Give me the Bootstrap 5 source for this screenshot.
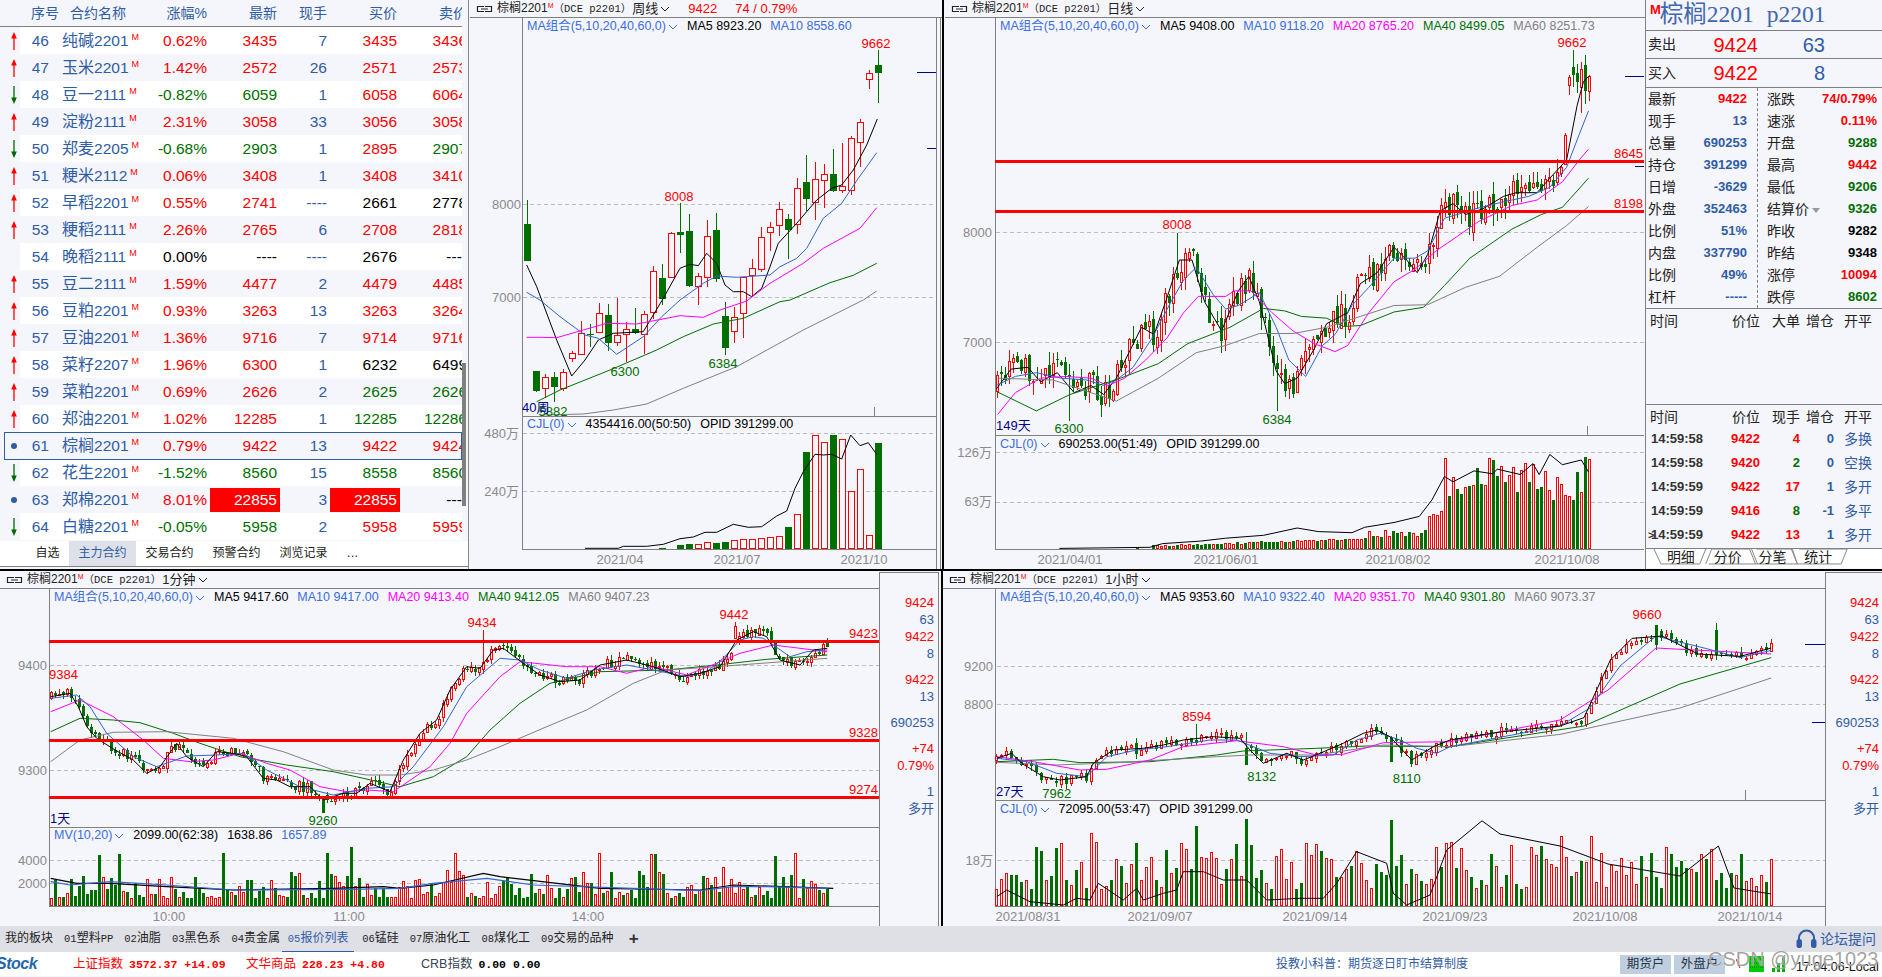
<!DOCTYPE html>
<html lang="zh-CN">
<head>
<meta charset="utf-8">
<title>棕榈2201</title>
<link href="https://cdn.jsdelivr.net/npm/bootstrap@5.3.0/dist/css/bootstrap.min.css" rel="stylesheet">
<style>
html,body{margin:0;width:1882px;height:977px;overflow:hidden;background:#f5f5fc;}
body{font-family:"Liberation Sans","Noto Sans CJK SC",sans-serif;font-size:14px;color:#000;}
.shell{width:1882px;height:977px;position:relative;}
.rowtop{height:571px;border-bottom:2px solid #000;}
.rowbot{height:355px;}
.listpane{width:469px;border-right:1px solid #888;flex:none;position:relative;overflow:hidden;}
.listclip{width:462px;height:540px;overflow:hidden;}
.qtable{width:470px;table-layout:fixed;--bs-table-bg:transparent;margin:0;font-size:15.5px;}
.qtable td,.qtable th{padding:0;height:27px;border:0;line-height:27px;white-space:nowrap;overflow:visible;font-weight:400;color:#2f5ca6;box-shadow:none;}
.qtable thead th{font-size:14px;color:#2f5ca6;height:26px;line-height:25px;border-bottom:1px solid #808080;}
.qtable tbody tr:nth-child(odd) td:not(:first-child){background:#fff;}
.qtable .rgt{text-align:right;padding-right:3px;}
.qtable .numc{text-align:right;}
.qtable th.hnum{padding-left:11px;}
.qtable th.hname{padding-left:21px;}
.qtable td.namecell{padding-left:13px;}
.qtable td.arr{padding-left:6px;}
.arr svg{vertical-align:middle;}
.zh{font-size:16px;}
.supm{font-size:9px;color:#f00;vertical-align:6px;margin-left:3px;line-height:0;}
.cr{color:#f00!important}.cg{color:#006f00!important}.ck{color:#000!important}.cb{color:#2f5ca6!important}
.qtable td.limit{background:#f00!important;color:#fff!important;box-shadow:inset 0 2px 0 #f5f5fc,inset 0 -1px 0 #f5f5fc;}
.selbox{position:absolute;left:4px;top:432px;width:458px;height:28px;border:1px solid #2f5ca6;pointer-events:none;}
.sbar{position:absolute;left:462px;top:363px;width:4px;height:143px;background:#808080;}
.listtabs{height:26px;background:#fff;border-bottom:1px solid #808080;margin-top:1px;padding-left:26px;font-size:12px;color:#222;}
.listtabs span{padding:0 9.5px;line-height:25px;}
.listtabs .on{background:#dfe1e8;color:#2f5ca6;}
.kpane{display:flex;flex-direction:column;position:relative;flex:none;}
.kweek{width:474px;margin-left:1px;border-right:2px solid #000;}
.kday{width:700px;margin-left:1px;}
.kmin{width:879px;}
.khour{width:884px;margin-left:2px;border-left:2px solid #000;}
.khead{height:18px;border-bottom:1px solid #808080;display:flex;align-items:center;flex:none;padding-left:6px;font-size:12.5px;color:#222;white-space:nowrap;}
.khead .nm{font-size:12px;margin-left:4px;}
.khead .mono{font-family:"Liberation Mono","Noto Sans CJK SC",monospace;font-size:10.5px;}
.khead .sm{font-size:7px;color:#f00;vertical-align:4px;}
.khead .per{margin-left:1px;font-size:13px;}
.khead .rd{color:#f00;font-size:13px;}
.khead .rd1{margin-left:18px;}
.khead .rd2{margin-left:18px;}
.kbody{flex:1 1 auto;position:relative;min-height:0;}
.kbody svg.kc{display:block;width:100%;height:100%;font-family:"Liberation Sans","Noto Sans CJK SC",sans-serif;}
.lgd{position:absolute;display:flex;align-items:center;gap:9px;font-size:12.5px;line-height:16px;white-space:nowrap;}
.l1{top:0;}
.kweek .lgd{left:57px;}
.kday .lgd{left:55px;}
.kmin .lgd{left:54px;}
.khour .lgd{left:57px;}
.lw{top:398px;}
.ld{top:418px;}
.lmv{top:238px;}
.lh{top:212px;}
.lb{color:#3a6fdc}.lk{color:#000}.lp{color:#f0f}.lgn{color:#007000}.lgy{color:#808080}
.chev{display:inline-block;width:10px;height:6px;margin-left:2px;}
.rcol{width:60px;flex:none;margin-top:1px;border:1px solid #808080;border-bottom:0;padding:21px 4px 0 0;text-align:right;font-size:13px;line-height:17px;color:#2f5ca6;}
.khour+.rcol{width:57px;border-right:0;padding-right:3px;}
.rcol .gp{margin-top:9px;}
.quote{width:237px;flex:none;border-left:1px solid #808080;background:#f5f5fc;position:relative;}
.qtitle{height:31px;border-bottom:1px solid #808080;display:flex;align-items:center;padding-left:4px;font-family:"Liberation Serif","Noto Sans CJK SC",serif;font-size:23.5px;color:#3f67ae;white-space:nowrap;}
.qtitle b{font:700 13px "Liberation Sans",sans-serif;color:#f00;align-self:flex-start;margin-top:2px;margin-right:-1px;}
.qtitle .sec{margin-left:13px;}
.bs-row{height:28px;border-bottom:1px solid #808080;display:flex;align-items:center;padding-left:2px;font-size:14px;color:#222;}
.bs-row+.bs-row{height:29px;}
.bs-row .px{width:82px;text-align:right;font-size:20px;color:#f00;}
.bs-row .qt{width:67px;text-align:right;font-size:20px;color:#2f5ca6;}
.stats{height:221px;display:grid;grid-template-columns:111px 126px;border-bottom:1px solid #808080;}
.stat{display:flex;flex-direction:column;}
.stat+.stat{border-left:1px dashed #808080;}
.st{height:22px;display:flex;justify-content:space-between;align-items:center;padding-left:2px;padding-right:10px;font-size:14px;color:#222;}
.stat+.stat .st{padding:0 6px 0 9px;}
.st b{font-size:13px;}
.tri{display:inline-block;width:0;height:0;border:4.5px solid transparent;border-top:5px solid #999;border-bottom:0;margin-left:3px;vertical-align:1px;}
.ticks{height:96px;border-bottom:1px solid #808080;padding-top:2px;}
.tk{display:grid;grid-template-columns:78px 32px 40px 34px 48px;padding-left:4px;font-size:14px;color:#222;height:20px;line-height:20px;align-items:center;white-space:nowrap;}
.tk span:nth-child(2),.tk span:nth-child(3),.tk span:nth-child(4){text-align:right;}
.tk span:nth-child(5){padding-left:10px;}
.ticks2{height:143px;padding-top:2px;}
.tk.rw{height:24px;line-height:24px;font-size:13px;font-weight:700;}
.tk.rw span:first-child{color:#333;padding-left:1px;}
.tk.rw span:nth-child(5){font-weight:400;color:#2f5ca6;font-size:14px;}
.tk.rw .cur{position:absolute;left:1px;color:#2f5ca6;font-weight:700;font-size:11px;}
.qtabs{height:20px;background:#fff;border-top:1px solid #808080;}
.qtabs svg{display:block;width:100%;height:19px;}
.barbot{height:26px;background:#dfe0e6;flex:none;font-size:12px;color:#222;align-items:center;position:relative;}
.barbot span.t{padding:0 6px;height:26px;line-height:25px;white-space:nowrap;margin-right:-1px;}
.barbot .mono{font-family:"Liberation Mono","Noto Sans CJK SC",monospace;font-size:10.5px;}
.barbot .on{color:#2f5ca6;border-bottom:1px solid #2f5ca6;width:72px;text-align:center;padding:0!important;margin-left:-3px;margin-right:2px!important;}
.barbot .first{margin-left:-1px;}
.barbot .plus{font-size:17px;font-weight:700;margin-left:10px;color:#333;}
.forum{margin-left:auto;margin-right:6px;color:#2f5ca6;font-size:14px;display:flex;align-items:center;gap:3px;}
.stbar{height:24px;background:#fff;flex:none;align-items:center;position:relative;font-size:13px;white-space:nowrap;}
.logo{font-weight:700;font-style:italic;color:#1f66ad;font-size:16px;margin-left:-4px;width:77px;letter-spacing:-.5px;}
.idx{font-size:12.5px;}
.idx b{font-family:"Liberation Mono",monospace;font-size:11.5px;margin-left:6px;}
.crbl{color:#345;}
.w1{width:173px;}.w2{width:175px;}.w3{width:855px;}
.tip{color:#2f5ca6;font-size:12px;width:344px;}
.acct{background:#bfcfe0;color:#234;height:19px;line-height:19px;width:51px;text-align:center;font-size:12.5px;margin-right:3px;}
.stimg{margin-left:8px;}
.clock{position:absolute;left:1796px;top:6px;font-size:12.5px;color:#111;}
.wmark{position:absolute;left:1708px;top:-8px;z-index:5;font-size:20px;color:rgba(100,100,100,.6);pointer-events:none;text-shadow:0 0 1px #fff;}
</style>
</head>
<body>
<div class="shell d-flex flex-column">
  <div class="rowtop d-flex">
    <div class="listpane">
      <div class="listclip">
        <table class="table table-borderless qtable" id="qt">
          <colgroup><col style="width:20px"><col style="width:29px"><col style="width:92px"><col style="width:69px"><col style="width:70px"><col style="width:50px"><col style="width:70px"><col style="width:70px"></colgroup>
          <thead><tr>
            <th></th><th class="hnum">序号</th><th class="hname">合约名称</th>
            <th class="rgt">涨幅%</th><th class="rgt">最新</th><th class="rgt">现手</th><th class="rgt">买价</th><th class="rgt">卖价</th>
          </tr></thead>
          <tbody id="qb"></tbody>
        </table>
      </div>
      <div class="selbox"></div><div class="sbar"></div>
      <div class="listtabs d-flex align-items-center">
        <span>自选</span><span class="on">主力合约</span><span>交易合约</span><span>预警合约</span><span>浏览记录</span><span>…</span>
      </div>
    </div>

    <section class="kpane kweek" id="pw">
      <div class="khead"><svg width="17" height="8" viewBox="0 0 17 8" fill="none" stroke="#222"><path d="M8 1.500H1.500v5H8M9 1.500h6.500v5H9M5 4h7" stroke-width="1.200"/></svg>
        <span class="nm">棕榈2201<span class="sm">M</span><span class="mono">（DCE p2201）</span></span><span class="per">周线</span><svg class="chev" viewBox="0 0 10 6" fill="none" stroke="#222"><path d="M1 1l4 4 4-4"/></svg>
        <span class="rd rd1">9422</span><span class="rd rd2">74 / 0.79%</span></div>
      <div class="kbody"><svg class="kc" id="cw"></svg>
        <div class="lgd l1"><span class="lb">MA组合(5,10,20,40,60,0)<svg class="chev" viewBox="0 0 10 6" fill="none" stroke="#3a6fdc"><path d="M1 1l4 4 4-4"/></svg></span><span class="lk">MA5 8923.20</span><span class="lb">MA10 8558.60</span></div>
        <div class="lgd lw"><span class="lb">CJL(0)<svg class="chev" viewBox="0 0 10 6" fill="none" stroke="#3a6fdc"><path d="M1 1l4 4 4-4"/></svg></span><span class="lk">4354416.00(50:50)</span><span class="lk">OPID 391299.00</span></div>
      </div>
    </section>

    <section class="kpane kday" id="pd">
      <div class="khead"><svg width="17" height="8" viewBox="0 0 17 8" fill="none" stroke="#222"><path d="M8 1.500H1.500v5H8M9 1.500h6.500v5H9M5 4h7" stroke-width="1.200"/></svg>
        <span class="nm">棕榈2201<span class="sm">M</span><span class="mono">（DCE p2201）</span></span><span class="per">日线</span><svg class="chev" viewBox="0 0 10 6" fill="none" stroke="#222"><path d="M1 1l4 4 4-4"/></svg></div>
      <div class="kbody"><svg class="kc" id="cd"></svg>
        <div class="lgd l1"><span class="lb">MA组合(5,10,20,40,60,0)<svg class="chev" viewBox="0 0 10 6" fill="none" stroke="#3a6fdc"><path d="M1 1l4 4 4-4"/></svg></span><span class="lk">MA5 9408.00</span><span class="lb">MA10 9118.20</span><span class="lp">MA20 8765.20</span><span class="lgn">MA40 8499.05</span><span class="lgy">MA60 8251.73</span></div>
        <div class="lgd ld"><span class="lb">CJL(0)<svg class="chev" viewBox="0 0 10 6" fill="none" stroke="#3a6fdc"><path d="M1 1l4 4 4-4"/></svg></span><span class="lk">690253.00(51:49)</span><span class="lk">OPID 391299.00</span></div>
      </div>
    </section>

    <aside class="quote">
      <div class="qtitle"><b>M</b><span>棕榈2201</span><span class="sec">p2201</span></div>
      <div class="bs-row"><span>卖出</span><span class="px">9424</span><span class="qt">63</span></div>
      <div class="bs-row"><span>买入</span><span class="px">9422</span><span class="qt">8</span></div>
      <div class="stats" id="st"></div>
      <div class="ticks"><div class="tk"><span>时间</span><span>价位</span><span>大单</span><span>增仓</span><span>开平</span></div></div>
      <div class="ticks2" id="tk"></div>
      <div class="qtabs"><svg viewBox="0 0 237 19"><g fill="none" stroke="#888"><path d="M8 0l7 15h39l6-15"/><path d="M60 0h1M60 15l6-15h38l6 15H63"/><path d="M112 15l-6-15M111 0h36l5 15h-42"/><path d="M152 15l-6-15M154 0h48l-6 15h-44"/></g>
        <g font-size="14" fill="#222" text-anchor="middle" font-family="Noto Sans CJK SC"><text x="35" y="13">明细</text><text x="82" y="13">分价</text><text x="127" y="13">分笔</text><text x="173" y="13">统计</text></g></svg></div>
    </aside>
  </div>

  <div class="rowbot d-flex">
    <section class="kpane kmin" id="pm">
      <div class="khead"><svg width="17" height="8" viewBox="0 0 17 8" fill="none" stroke="#222"><path d="M8 1.500H1.500v5H8M9 1.500h6.500v5H9M5 4h7" stroke-width="1.200"/></svg>
        <span class="nm">棕榈2201<span class="sm">M</span><span class="mono">（DCE p2201）</span></span><span class="per">1分钟</span><svg class="chev" viewBox="0 0 10 6" fill="none" stroke="#222"><path d="M1 1l4 4 4-4"/></svg></div>
      <div class="kbody"><svg class="kc" id="cm"></svg>
        <div class="lgd l1"><span class="lb">MA组合(5,10,20,40,60,0)<svg class="chev" viewBox="0 0 10 6" fill="none" stroke="#3a6fdc"><path d="M1 1l4 4 4-4"/></svg></span><span class="lk">MA5 9417.60</span><span class="lb">MA10 9417.00</span><span class="lp">MA20 9413.40</span><span class="lgn">MA40 9412.05</span><span class="lgy">MA60 9407.23</span></div>
        <div class="lgd lmv"><span class="lb">MV(10,20)<svg class="chev" viewBox="0 0 10 6" fill="none" stroke="#3a6fdc"><path d="M1 1l4 4 4-4"/></svg></span><span class="lk">2099.00(62:38)</span><span class="lk">1638.86</span><span class="lb">1657.89</span></div>
      </div>
    </section>
    <div class="rcol"><div class="cr">9424</div><div>63</div><div class="cr">9422</div><div>8</div><div class="cr gp">9422</div><div>13</div><div class="gp">690253</div><div class="cr gp">+74</div><div class="cr">0.79%</div><div class="gp">1</div><div>多开</div></div>
    <section class="kpane khour" id="ph">
      <div class="khead"><svg width="17" height="8" viewBox="0 0 17 8" fill="none" stroke="#222"><path d="M8 1.500H1.500v5H8M9 1.500h6.500v5H9M5 4h7" stroke-width="1.200"/></svg>
        <span class="nm">棕榈2201<span class="sm">M</span><span class="mono">（DCE p2201）</span></span><span class="per">1小时</span><svg class="chev" viewBox="0 0 10 6" fill="none" stroke="#222"><path d="M1 1l4 4 4-4"/></svg></div>
      <div class="kbody"><svg class="kc" id="ch"></svg>
        <div class="lgd l1"><span class="lb">MA组合(5,10,20,40,60,0)<svg class="chev" viewBox="0 0 10 6" fill="none" stroke="#3a6fdc"><path d="M1 1l4 4 4-4"/></svg></span><span class="lk">MA5 9353.60</span><span class="lb">MA10 9322.40</span><span class="lp">MA20 9351.70</span><span class="lgn">MA40 9301.80</span><span class="lgy">MA60 9073.37</span></div>
        <div class="lgd lh"><span class="lb">CJL(0)<svg class="chev" viewBox="0 0 10 6" fill="none" stroke="#3a6fdc"><path d="M1 1l4 4 4-4"/></svg></span><span class="lk">72095.00(53:47)</span><span class="lk">OPID 391299.00</span></div>
      </div>
    </section>
    <div class="rcol"><div class="cr">9424</div><div>63</div><div class="cr">9422</div><div>8</div><div class="cr gp">9422</div><div>13</div><div class="gp">690253</div><div class="cr gp">+74</div><div class="cr">0.79%</div><div class="gp">1</div><div>多开</div></div>
  </div>

  <nav class="barbot d-flex">
    <span class="t first">我的板块</span><span class="t"><span class="mono">01</span>塑料<span class="mono">PP</span></span><span class="t"><span class="mono">02</span>油脂</span><span class="t"><span class="mono">03</span>黑色系</span><span class="t"><span class="mono">04</span>贵金属</span><span class="t on"><span class="mono">05</span>报价列表</span><span class="t"><span class="mono">06</span>锰硅</span><span class="t"><span class="mono">07</span>原油化工</span><span class="t"><span class="mono">08</span>煤化工</span><span class="t"><span class="mono">09</span>交易的品种</span><span class="plus">+</span>
    <div class="forum"><svg width="21" height="20" viewBox="0 0 21 20" fill="none" stroke="#2f5ca6" stroke-width="2"><path d="M3 13V9a7.500 7.500 0 0 1 15 0v4"/><rect x="1.500" y="11" width="3.500" height="7" rx="1.500" fill="#2f5ca6"/><rect x="16" y="11" width="3.500" height="7" rx="1.500" fill="#2f5ca6"/></svg>论坛提问</div>
  </nav>
  <footer class="stbar d-flex">
    <span class="logo">Stock</span>
    <span class="idx cr w1">上证指数<b>3572.37 +14.09</b></span>
    <span class="idx cr w2">文华商品<b>228.23 +4.80</b></span>
    <span class="idx w3"><span class="crbl">CRB指数</span><b>0.00 0.00</b></span>
    <span class="tip">投教小科普：期货逐日盯市结算制度</span>
    <span class="acct">期货户</span><span class="acct">外盘户</span>
    <svg class="stimg" width="60" height="20" viewBox="0 0 60 20"><path d="M0 5l4 9" stroke="#f00"/><rect x="13" y="2" width="15" height="16" fill="#0c0"/><path d="M14 5h13M14 9h13M14 13h13" stroke="#063" stroke-dasharray="1 1"/><rect x="36" y="14" width="3" height="4" fill="#0a0"/><rect x="41" y="9" width="3" height="9" fill="#0a0"/><rect x="46" y="3" width="3" height="15" fill="#0a0"/></svg>
    <span class="clock">17:04:06-Local</span>
    <span class="wmark">CSDN @yuge1023</span>
  </footer>
</div>

<script src="https://cdn.jsdelivr.net/npm/bootstrap@5.3.0/dist/js/bootstrap.bundle.min.js"></script>
<script>
/* ---------- quote list ---------- */
const R='cr',G='cg',K='ck',B='cb';
const rows=[
['u',46,'纯碱2201','0.62%',R,'3435',R,'7',B,'3435',R,'3436',R],
['u',47,'玉米2201','1.42%',R,'2572',R,'26',B,'2571',R,'2573',R],
['d',48,'豆一2111','-0.82%',G,'6059',G,'1',B,'6058',R,'6064',R],
['u',49,'淀粉2111','2.31%',R,'3058',R,'33',B,'3056',R,'3058',R],
['d',50,'郑麦2205','-0.68%',G,'2903',G,'1',B,'2895',R,'2907',G],
['u',51,'粳米2112','0.06%',R,'3408',R,'1',B,'3408',R,'3410',R],
['u',52,'早稻2201','0.55%',R,'2741',R,'----',B,'2661',K,'2778',K],
['u',53,'粳稻2111','2.26%',R,'2765',R,'6',B,'2708',R,'2818',R],
['',54,'晚稻2111','0.00%',K,'----',K,'----',B,'2676',K,'----',K],
['u',55,'豆二2111','1.59%',R,'4477',R,'2',B,'4479',R,'4485',R],
['u',56,'豆粕2201','0.93%',R,'3263',R,'13',B,'3263',R,'3264',R],
['u',57,'豆油2201','1.36%',R,'9716',R,'7',B,'9714',R,'9716',R],
['u',58,'菜籽2207','1.96%',R,'6300',R,'1',B,'6232',K,'6499',K],
['u',59,'菜粕2201','0.69%',R,'2626',R,'2',B,'2625',G,'2626',G],
['u',60,'郑油2201','1.02%',R,'12285',R,'1',B,'12285',G,'12286',G],
['o',61,'棕榈2201','0.79%',R,'9422',R,'13',B,'9422',R,'9424',R],
['d',62,'花生2201','-1.52%',G,'8560',G,'15',B,'8558',G,'8560',G],
['o',63,'郑棉2201','8.01%',R,'22855','limit','3',B,'22855','limit','----',K],
['d',64,'白糖2201','-0.05%',G,'5958',G,'2',B,'5958',R,'5959',R]];
const ic={u:'<svg width="12" height="20" viewBox="0 0 12 20"><path d="M8 19V5" stroke="#f00" stroke-width="1.300"/><path d="M8 1l2.800 6.500h-5.600z" fill="#f00"/></svg>',
d:'<svg width="12" height="20" viewBox="0 0 12 20"><path d="M8 1v14" stroke="#060" stroke-width="1.300"/><path d="M8 19l2.800-6.500h-5.600z" fill="#060"/></svg>',
o:'<svg width="12" height="20" viewBox="0 0 12 20"><circle cx="8" cy="10" r="3" fill="#2f5ca6"/></svg>','':''};
document.getElementById('qb').innerHTML=rows.map(r=>`<tr><td class="arr">${ic[r[0]]}</td><td class="numc">${r[1]}</td><td class="namecell"><span class="zh">${r[2].slice(0,2)}</span>${r[2].slice(2)}<span class="supm">M</span></td><td class="rgt ${r[4]}">${r[3]}</td><td class="rgt ${r[6]}">${r[5]}</td><td class="rgt ${r[8]}">${r[7]}</td><td class="rgt ${r[10]}">${r[9]}</td><td class="rgt ${r[12]}">${r[11]}</td></tr>`).join('');
/* ---------- quote stats ---------- */
const s1=[['最新','9422',R],['现手','13',B],['总量','690253',B],['持仓','391299',B],['日增','-3629',B],['外盘','352463',B],['比例','51%',B],['内盘','337790',B],['比例','49%',B],['杠杆','-----',B]];
const s2=[['涨跌','74/0.79%',R],['速涨','0.11%',R],['开盘','9288',G],['最高','9442',R],['最低','9206',G],['结算价<i class="tri"></i>','9326',G],['昨收','9282',K],['昨结','9348',K],['涨停','10094',R],['跌停','8602',G]];
const stat=a=>'<div class="stat">'+a.map(r=>`<div class="st"><span>${r[0]}</span><b class="${r[2]}">${r[1]}</b></div>`).join('')+'</div>';
document.getElementById('st').innerHTML=stat(s1)+stat(s2);
const tk=[['14:59:58','9422','4',R,'0','多换'],['14:59:58','9420','2',G,'0','空换'],['14:59:59','9422','17',R,'1','多开'],['14:59:59','9416','8',G,'-1','多平'],['14:59:59','9422','13',R,'1','多开']];
document.getElementById('tk').innerHTML='<div class="tk"><span>时间</span><span>价位</span><span>现手</span><span>增仓</span><span>开平</span></div>'+tk.map((r,i)=>`<div class="tk rw"><span>${i==4?'<span class="cur">&gt;</span>':''}${r[0]}</span><span class="cr">${r[1]}</span><span class="${r[3]}">${r[2]}</span><span class="cb">${r[4]}</span><span>${r[5]}</span></div>`).join('');

/* ---------- chart helpers (page coordinates) ---------- */
const C={r:'#f00',g:'#006f00',bg:'#f5f5fc',bl:'#3264d0',pk:'#f0f',ma40:'#007000',gy:'#808080',lb:'#8a8a8a'};
const rnd=s=>()=>(s=(s*16807)%2147483647)/2147483647;
const fr=(ox,oy,sx,sy,a)=>{const o=[];for(const p of a)o.push([ox+p[0]/sx,oy+p[1]/sy]);return o;};
const poly=(pts,col,w=1)=>`<polyline fill="none" stroke="${col}" stroke-width="${w}" points="${pts.map(p=>p[0].toFixed(1)+','+p[1].toFixed(1)).join(' ')}"/>`;
const interp=p=>x=>{if(x<=p[0][0])return p[0][1];for(let i=1;i<p.length;i++)if(x<=p[i][0]){const t=(x-p[i-1][0])/(p[i][0]-p[i-1][0]);return p[i-1][1]+t*(p[i][1]-p[i-1][1]);}return p[p.length-1][1];};
const txt=(x,y,s,col,a='start',sz=13,extra='')=>`<text x="${x}" y="${y}" fill="${col}" text-anchor="${a}" font-size="${sz}" dominant-baseline="central" ${extra}>${s}</text>`;
const dash=(x1,x2,y)=>`<line x1="${x1}" x2="${x2}" y1="${y+.5}" y2="${y+.5}" stroke="#bdbdbd" stroke-dasharray="4 3"/>`;
const ln=(x1,y1,x2,y2,col='#808080',w=1)=>`<line x1="${x1}" y1="${y1}" x2="${x2}" y2="${y2}" stroke="${col}" stroke-width="${w}"/>`;
function candle(c,bw){
  const x=Math.round(c.x),h=Math.floor(bw/2);let s='';
  const col=c.up?C.r:C.g,t=Math.round(c.bt),b=Math.round(Math.max(c.bb,c.bt+1));
  s+=`<line x1="${x+.5}" x2="${x+.5}" y1="${Math.round(c.wt)}" y2="${Math.round(c.wb)}" stroke="${col}"/>`;
  if(c.up)s+=`<rect x="${x-h+.5}" y="${t+.5}" width="${2*h}" height="${Math.max(b-t,1)}" fill="${C.bg}" stroke="${col}"/>`;
  else s+=`<rect x="${x-h}" y="${t}" width="${2*h+1}" height="${Math.max(b-t,1)}" fill="${col}"/>`;
  return s;
}
function gen(n,x0,step,path,noise,wick,seed,over={}){
  const r=rnd(seed),out=[];let prev=path(x0);
  for(let i=0;i<n;i++){
    const x=x0+i*step,cl=path(x)+(r()-.5)*noise,op=prev+(r()-.5)*noise*.35;
    const up=cl<op,bt=Math.min(cl,op),bb=Math.max(cl,op);
    const c={x,up,bt,bb,wt:bt-r()*wick,wb:bb+r()*wick};
    if(over[i])Object.assign(c,over[i]);
    out.push(c);prev=cl;
  }
  return out;
}
const bars=(cs,base,hf,w)=>cs.map((c,i)=>{const v=hf(c.x,i);if(v<=0)return'';const x=Math.round(c.x),h=Math.floor(w/2),top=Math.round(base-v);
  return c.up?`<rect x="${x-h+.5}" y="${top+.5}" width="${2*h}" height="${base-top-1}" fill="${C.bg}" stroke="${C.r}"/>`:`<rect x="${x-h}" y="${top}" width="${2*h+1}" height="${base-top}" fill="${C.g}"/>`}).join('');
const setup=(id,x,y,w,h,html)=>{const e=document.getElementById(id);e.setAttribute('viewBox',`${x} ${y} ${w} ${h}`);e.setAttribute('preserveAspectRatio','none');e.innerHTML=html;};
const crisp=s=>`<g shape-rendering="crispEdges">${s}</g>`;

/* ---------- weekly ---------- */
(function(){
 const z3=a=>fr(470,0,3,3,a),z4=a=>fr(470,300,3,3,a);
 const d=[[0,224,261,200,261],[1,371,391,371,392],[2,377,388,374,398,1],[3,377,387,372,402],[4,372,388,369,391,1],[5,353,358,351,362,1],[6,333,354,321,355,1],[7,334,335,324,347],[8,313,332,303,332,1],[9,315,343,304,351],[10,335,342,298,346,1],[11,329,334,322,362,1],[12,329,333,308,334],[13,314,334,311,354,1],[14,271,312,266,319,1],[15,278,299,264,305],[16,233,277,232,277,1],[17,232,235,203,253],[18,231,286,214,287],[19,276,286,273,305,1],[20,236,277,220,287,1],[21,230,279,213,282],[22,316,348,302,355],[23,317,331,307,343,1],[24,277,313,277,338,1],[25,268,275,259,297,1],[26,237,269,227,272,1],[27,227,232,222,251,1],[28,209,225,202,236,1],[29,219,230,214,259],[30,188,224,178,234,1],[31,182,199,155,211],[32,179,202,162,220,1],[33,174,180,164,208,1],[34,174,191,149,192],[35,186,190,143,193,1],[36,138,190,136,195,1],[37,122,142,119,167,1],[38,73,79,70,89,1],[39,65,73,50,103]];
 const cs=d.map(a=>({x:526.7+a[0]*9,bt:a[1],bb:a[2],wt:a[3],wb:a[4],up:!!a[5]}));
 const ma5=z3([[170,795],[200,860],[215,900]]).concat(z4([[260,120],[305,228],[345,180],[385,120],[430,100],[520,95]]),z3([[580,895],[630,805],[660,793],[685,797],[710,760],[740,790],[765,855],[790,875],[820,875],[845,890],[875,865],[900,800],[925,730],[980,670],[1040,600],[1085,565],[1115,555],[1150,510],[1190,435],[1222,357]]));
 const ma10=z3([[170,877],[210,900]]).concat(z4([[270,50],[345,105],[385,115],[440,163],[520,110],[575,50],[630,0]]),z3([[700,850],[740,828],[800,832],[900,825],[930,800],[980,775],[1010,745],[1060,655],[1115,610],[1165,535],[1190,500],[1220,458]]));
 const ma20=z4([[170,112],[210,112],[260,113],[340,90],[410,70],[500,72],[630,47],[700,52],[750,30],[830,3]]).concat(z3([[900,850],[1000,790],[1060,745],[1170,685],[1220,623]]));
 const ma40=z4([[200,305],[270,270],[420,210],[560,150],[640,110],[730,72],[820,55],[930,5],[960,0]]).concat(z3([[1080,848],[1150,826],[1220,790]]));
 const ma60=z4([[210,345],[340,342],[430,330],[530,312],[640,265],[800,200],[1000,90],[1180,0]]).concat(z3([[1220,873]]));
 const vb=[[15,745,0],[16,745,1],[17,735,0],[18,733,0],[19,733,1],[20,727,1],[21,730,0],[22,727,0],[23,722,1],[24,718,1],[25,718,1],[26,715,1],[27,712,1],[28,709,1],[29,681,0],[30,643,1],[31,456,0],[32,407,1],[33,427,1],[34,405,0],[35,418,1],[36,574,1],[37,508,1],[38,706,1],[39,429,0]];
 const vol=vb.map(a=>({x:526.7+a[0]*9,up:!!a[2],v:(748-a[1])/3}));
 const oi=z4([[345,745],[445,745],[460,739],[530,739],[580,733],[630,716],[670,711],[705,697],[740,697],[790,673],[835,682],[875,680],[920,648],[950,633],[975,565],[1000,515],[1035,463],[1060,465],[1085,463],[1115,477],[1142,405],[1170,437],[1195,428],[1220,463]]);
 let s='';
 s+=dash(523,936,204)+dash(523,936,297)+dash(523,936,433)+dash(523,936,491);
 s+=crisp(ln(522.5,18,522.5,550)+ln(522,416.500,936,416.500)+ln(522,549.500,936,549.500)+ln(936.500,0,936.500,569)+ln(940.500,0,940.500,569)+ln(917,72.500,936,72.500,'#00008b')+ln(927,148.500,936,148.500,'#00008b')+ln(874.500,407,874.500,416));
 s+=crisp(cs.map(c=>candle(c,7)).join(''));
 s+=poly(ma5,'#000')+poly(ma10,C.bl)+poly(ma20,C.pk)+poly(ma40,C.ma40)+poly(ma60,C.gy);
 s+=crisp(bars(vol,549,(x,i)=>vol[i].v,7));
 s+=poly(oi,'#000');
 s+=txt(876,43,'9662',C.r,'middle')+txt(679,196,'8008',C.r,'middle')+txt(625,371,'6300',C.g,'middle')+txt(723,363,'6384',C.g,'middle')+txt(553,411,'5882',C.g,'middle')+txt(522,407,'40周','#00008b');
 s+=txt(521,204.500,'8000',C.lb,'end')+txt(521,297.500,'7000',C.lb,'end')+txt(519,433,'480万',C.lb,'end')+txt(519,491,'240万',C.lb,'end');
 s+=txt(620,559,'2021/04',C.lb,'middle')+txt(737,559,'2021/07',C.lb,'middle')+txt(864,559,'2021/10',C.lb,'middle');
 setup('cw',470,18,472,551,s);
})();

/* ---------- daily ---------- */
(function(){
 const z=a=>fr(990,0,2.376,2.75,a);
 const ma5=z([[15,1070],[50,1015],[90,1010],[120,1050],[160,1025],[200,1080],[240,1060],[270,1085],[300,1040],[330,970],[360,900],[390,920],[420,820],[450,715],[480,715],[510,830],[550,910],[590,800],[615,760],[640,830],[680,1020],[700,1055],[730,1040],[770,960],[800,890],[850,860],[880,780],[920,750],[960,680],[990,715],[1015,750],[1040,700],[1070,580],[1100,560],[1130,590],[1170,575],[1220,540],[1250,530],[1300,530],[1330,490],[1370,440],[1395,290],[1410,225],[1422,210]]);
 const ma10=z([[15,1060],[60,1035],[110,1025],[170,1040],[230,1045],[270,1060],[300,1045],[340,1010],[385,930],[430,830],[460,770],[490,735],[530,810],[560,850],[590,840],[640,805],[680,900],[710,990],[750,1035],[790,950],[820,920],[860,840],[900,790],[960,710],[1010,710],[1040,690],[1080,600],[1110,590],[1150,575],[1220,555],[1280,540],[1330,515],[1370,460],[1400,370],[1422,305]]);
 const ma20=z([[18,1140],[60,1080],[120,1040],[180,1035],[240,1040],[280,1060],[320,1040],[370,990],[420,930],[460,860],[495,815],[560,815],[580,800],[620,800],[670,860],[720,910],[770,945],[820,967],[850,950],[900,860],[960,775],[1010,740],[1060,690],[1110,650],[1160,610],[1240,565],[1300,550],[1360,500],[1400,440],[1422,410]]);
 const ma40=z([[18,1078],[110,1130],[190,1085],[310,1040],[400,1000],[470,945],[570,900],[650,848],[700,855],[740,870],[800,875],[840,898],[880,895],[960,858],[1030,845],[1080,785],[1140,710],[1240,630],[1310,590],[1360,570],[1422,490]]);
 const ma60=z([[18,1040],[150,1045],[240,1080],[300,1103],[400,1040],[490,970],[560,950],[640,917],[720,917],[800,900],[880,870],[960,840],[1040,838],[1130,790],[1210,760],[1300,680],[1370,620],[1422,568]]);
 const oi=z([[165,1508],[380,1505],[410,1495],[500,1488],[560,1480],[650,1472],[730,1452],[780,1462],[860,1465],[890,1450],[960,1437],[1020,1420],[1050,1375],[1080,1310],[1100,1325],[1150,1295],[1195,1303],[1205,1290],[1260,1305],[1290,1275],[1305,1305],[1330,1250],[1360,1278],[1405,1265],[1422,1298]]);
 const ix=zx=>Math.round((990+zx/2.376-997)/4),Y=v=>v/2.75;
 const o={};
 o[ix(444)]={wt:Y(640)};o[ix(190)]={wb:Y(1158),up:false};o[ix(683)]={wb:Y(1130),up:false};
 [[1367,1,370,450,365,455],[1377,1,212,235,205,262],[1387,0,185,205,138,240],[1396,0,200,225,175,255],[1405,1,190,240,170,310],[1415,0,178,250,150,285],[1424,1,210,250,205,278]].forEach(a=>{o[ix(a[0])]={up:!!a[1],bt:Y(a[2]),bb:Y(a[3]),wt:Y(a[4]),wb:Y(a[5])};});
 const cs=gen(149,997,4,interp(ma5),28,14,4111,o);
 const r=rnd(777);
 const hf=x=>{const zx=(x-990)*2.376,n=r();if(zx<165)return 0;if(zx<380)return n<.1?1:0;if(zx<1040)return 2+n*2+(zx-380)/660*10+n*(zx>900?8:0);if(zx<1075)return 25+n*30;return 48+n*47;};
 let s='';
 s+=dash(996,1644,232)+dash(996,1644,342)+dash(996,1644,452)+dash(996,1644,502);
 s+=crisp(ln(995.500,18,995.500,550)+ln(995,435.500,1644,435.500)+ln(995,549.500,1644,549.500)+ln(1625,76.500,1644,76.500,'#00008b')+ln(1635,166.500,1644,166.500,'#00008b')+ln(1587.500,426,1587.500,435));
 s+=crisp(cs.map(c=>candle(c,3)).join(''));
 s+=poly(ma5,'#000')+poly(ma10,C.bl)+poly(ma20,C.pk)+poly(ma40,C.ma40)+poly(ma60,C.gy);
 s+=crisp(`<rect x="995" y="159.500" width="649" height="3" fill="#f00"/><rect x="995" y="209.500" width="649" height="3" fill="#f00"/>`);
 s+=crisp(bars(cs,549,hf,3));
 s+=poly(oi,'#000');
 s+=txt(1643,153,'8645',C.r,'end')+txt(1643,203,'8198',C.r,'end');
 s+=txt(1572,42,'9662',C.r,'middle')+txt(1177,224,'8008',C.r,'middle')+txt(1069,428,'6300',C.g,'middle')+txt(1277,419,'6384',C.g,'middle')+txt(996,425,'149天','#00008b');
 s+=txt(992,232.500,'8000',C.lb,'end')+txt(992,342.500,'7000',C.lb,'end')+txt(992,452,'126万',C.lb,'end')+txt(992,501,'63万',C.lb,'end');
 [[1070,'2021/04/01'],[1226,'2021/06/01'],[1398,'2021/08/02'],[1567,'2021/10/08']].forEach(a=>s+=txt(a[0],559,a[1],C.lb,'middle'));
 setup('cd',945,18,700,551,s);
})();

/* ---------- 1-minute ---------- */
(function(){
 const z=a=>fr(0,570,3,3,a);
 const ma5=z([[152,380],[210,370],[235,410],[260,470],[290,505],[345,540],[400,570],[440,610],[480,590],[530,520],[560,560],[610,590],[650,545],[700,550],[740,560],[790,625],[830,630],[870,650],[930,650],[970,690],[1030,670],[1070,670],[1110,640],[1170,665],[1210,570],[1260,490],[1310,450],[1350,360],[1400,290],[1440,295],[1480,240],[1510,235],[1570,280],[1620,315],[1680,335],[1740,330],[1800,285],[1880,270],[1960,290],[2040,320],[2100,310],[2160,290],[2210,210],[2260,185],[2300,200],[2340,270],[2400,285],[2440,240],[2482,235]]);
 const ma10=z([[152,385],[230,375],[270,410],[320,490],[400,560],[470,590],[560,558],[650,555],[730,550],[800,600],[900,650],[1000,675],[1100,655],[1180,650],[1240,590],[1330,470],[1400,350],[1500,265],[1560,270],[1620,300],[1700,325],[1780,300],[1880,285],[1960,300],[2060,320],[2120,305],[2170,265],[2220,210],[2260,200],[2290,205],[2320,225],[2370,260],[2420,245],[2482,240]]);
 const ma20=z([[152,425],[240,390],[340,440],[430,510],[490,565],[570,575],[640,570],[720,550],[800,580],[870,600],[960,650],[1040,665],[1100,660],[1180,665],[1290,590],[1350,520],[1400,430],[1500,320],[1560,275],[1700,290],[1800,290],[1880,310],[1960,290],[2060,315],[2150,280],[2220,250],[2320,225],[2400,235],[2482,245]]);
 const ma40=z([[152,485],[240,445],[340,450],[420,458],[520,490],[600,520],[720,560],[860,585],[1000,605],[1090,625],[1200,650],[1300,620],[1400,560],[1470,480],[1560,400],[1650,340],[1800,305],[2000,300],[2150,285],[2300,268],[2482,255]]);
 const ma60=z([[152,575],[240,510],[340,487],[500,485],[700,505],[850,545],[1000,600],[1100,615],[1200,615],[1300,600],[1400,570],[1500,530],[1640,470],[1760,420],[1900,340],[2000,300],[2150,290],[2482,265]]);
 const m1=z([[152,925],[230,940],[330,940],[500,950],[700,960],[1000,955],[1150,950],[1200,955],[1300,945],[1450,910],[1500,920],[1800,955],[2100,960],[2200,945],[2500,955]]);
 const m2=z([[152,935],[210,945],[330,935],[500,945],[700,960],[1050,958],[1200,955],[1300,940],[1460,925],[1600,945],[1900,955],[2100,962],[2200,950],[2300,950],[2482,955]]);
 const ix=zx=>Math.round((zx/3-51)/4),Y=v=>570+v/3;
 const o={};
 o[ix(1450)]={up:true,wt:Y(180)};o[ix(2206)]={up:true,bt:Y(168),bb:Y(205),wt:Y(155),wb:Y(208)};o[ix(970)]={up:false,bt:Y(690),bb:Y(728),wt:Y(680),wb:Y(730)};
 const cs=gen(195,51,4,interp(ma5),11,5,9001,o);
 const r=rnd(515);
 const hf=(x)=>{const n=r();if(Math.abs(x-351)<2)return 59;let v=8+n*n*32;if(n>.93)v+=14;if(x>800&&x<830)v=12+n*18;if(x>700&&x<740)v=10+n*30;return v;};
 let s='';
 s+=dash(50,879,665)+dash(50,879,770)+dash(50,879,860)+dash(50,879,883);
 s+=crisp(ln(49.500,589,49.500,907)+ln(49,827.500,879,827.500)+ln(49,906.500,879,906.500));
 s+=crisp(cs.map(c=>candle(c,3)).join(''));
 s+=poly(ma40,C.ma40)+poly(ma60,C.gy)+poly(ma20,C.pk)+poly(ma10,C.bl)+poly(ma5,'#000');
 s+=crisp(`<rect x="49" y="640" width="830" height="3" fill="#f00"/><rect x="49" y="739" width="830" height="3" fill="#f00"/><rect x="49" y="796" width="830" height="3" fill="#f00"/>`);
 s+=crisp(bars(cs,906,hf,3));
 s+=poly(m1,'#000',1.200)+poly(m2,C.bl,1.200);
 s+=txt(878,633,'9423',C.r,'end')+txt(878,732,'9328',C.r,'end')+txt(878,789,'9274',C.r,'end');
 s+=txt(49,674.500,'9384',C.r)+txt(482,622,'9434',C.r,'middle')+txt(734,614,'9442',C.r,'middle')+txt(323,820,'9260',C.g,'middle')+txt(50,818,'1天','#00008b');
 s+=txt(47,665.500,'9400',C.lb,'end')+txt(47,770.500,'9300',C.lb,'end')+txt(47,860.500,'4000',C.lb,'end')+txt(47,883.500,'2000',C.lb,'end');
 [[169,'10:00'],[349,'11:00'],[588,'14:00']].forEach(a=>s+=txt(a[0],916,a[1],C.lb,'middle'));
 setup('cm',0,589,879,337,s);
})();

/* ---------- 1-hour ---------- */
(function(){
 const z=a=>fr(950,570,3,3,a),u=a=>fr(0,0,1/1.2,1/1.2,a);
 const ma5=z([[140,565],[185,550],[215,580],[280,620],[330,630],[410,620],[430,580],[490,540],[580,535],[640,525],[700,510],[790,500],[870,505],[900,540],[940,580],[1010,550],[1060,570],[1110,550],[1180,520],[1240,490],[1280,480],[1320,500],[1385,570],[1450,530],[1500,510]]).concat(u([[1250,610],[1300,605],[1320,598],[1342,550],[1360,532],[1385,530],[1415,545],[1450,547],[1476,540]]));
 const ma10=z([[140,565],[230,575],[320,610],[410,620],[470,560],[560,540],[650,530],[780,510],[860,510],[960,550],[1050,560],[1150,555],[1220,510],[1290,490],[1350,510],[1400,535],[1460,550],[1500,530]]).concat(u([[1300,605],[1325,590],[1350,555],[1380,530],[1420,540],[1450,548],[1476,542]]));
 const ma20=z([[140,560],[250,575],[390,600],[470,598],[600,570],[700,530],[860,512],[1000,530],[1100,555],[1180,553],[1300,518],[1500,515]]).concat(u([[1300,600],[1340,575],[1380,540],[1476,545]]));
 const ma40=z([[140,575],[310,568],[390,578],[600,575],[800,555],[880,543],[1100,535],[1250,528],[1500,530]]).concat(u([[1320,605],[1400,570],[1476,548]]));
 const ma60=z([[140,577],[320,585],[500,578],[800,560],[900,555],[1100,555],[1300,525],[1500,530]]).concat(u([[1300,612],[1400,590],[1476,565]]));
 const oi=z([[140,980],[170,960],[240,995],[340,1005],[380,985],[420,990],[445,940],[520,990],[560,955],[580,990],[640,970],[680,960],[700,905],[760,905],[820,930],[890,930],[950,990],[1050,985],[1120,985],[1160,940],[1220,845],[1310,880],[1330,970],[1370,1005],[1440,975],[1490,840]]).concat(u([[1235,684],[1250,695],[1300,705],[1340,720],[1400,730],[1432,705],[1445,740],[1476,745]]));
 const ix=x=>Math.round((x-996)/5),zx=v=>950+v/3;
 const o={};
 o[ix(zx(742))]={wt:570+462/3,up:false};o[ix(zx(200))]={up:false};
 o[ix(1656)]={up:false,bt:625,bb:645,wt:625,wb:650};o[ix(1716)]={up:false,bt:630,bb:655,wt:623,wb:660};
 o[ix(zx(892))]={up:false,bt:570+535/3,bb:570+585/3};o[ix(zx(1327))]={up:false,bt:570+500/3,bb:570+575/3};
 const cs=gen(156,996,5,interp(ma5),10,5,31337,o);
 const r=rnd(2024);
 const hf=x=>{const n=r(),d=v=>Math.abs(x-zx(v))<3;if(d(892))return 87;if(d(1327))return 86;if(d(742))return 80;if(d(427))return 73;if(x>1550&&x<1600&&n>.7)return 70;return 16+n*48;};
 let s='';
 s+=dash(997,1825,666)+dash(997,1825,704)+dash(997,1825,860);
 s+=crisp(ln(995.500,589,995.500,907)+ln(995,800.500,1825,800.500)+ln(995,906.500,1825,906.500)+ln(1805,644.500,1825,644.500,'#00008b')+ln(1812,722.500,1825,722.500,'#00008b')+ln(1745.500,790,1745.500,800));
 s+=crisp(cs.map(c=>candle(c,3)).join(''));
 s+=poly(ma40,C.ma40)+poly(ma60,C.gy)+poly(ma20,C.pk)+poly(ma10,C.bl)+poly(ma5,'#000');
 s+=crisp(bars(cs,906,hf,3));
 s+=poly(oi,'#000');
 s+=txt(1647,614,'9660',C.r,'middle')+txt(zx(740),570+440/3,'8594',C.r,'middle')+txt(zx(320),570+670/3,'7962',C.g,'middle')+txt(zx(935),570+620/3,'8132',C.g,'middle')+txt(zx(1370),570+625/3,'8110',C.g,'middle')+txt(996,791,'27天','#00008b');
 s+=txt(993,666.500,'9200',C.lb,'end')+txt(993,704.500,'8800',C.lb,'end')+txt(993,860.500,'18万',C.lb,'end');
 [[1028,'2021/08/31'],[1160,'2021/09/07'],[1315,'2021/09/14'],[1455,'2021/09/23'],[1605,'2021/10/08'],[1750,'2021/10/14']].forEach(a=>s+=txt(a[0],916,a[1],C.lb,'middle'));
 setup('ch',943,589,882,337,s);
})();
</script>
</body>
</html>
